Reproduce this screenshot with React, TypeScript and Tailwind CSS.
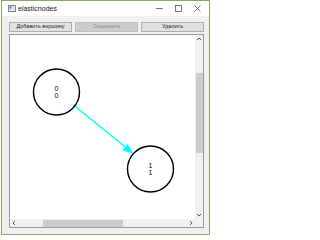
import React from 'react';

// Small chevron used by the scroll bar arrows
const Chevron = ({ dir }: { dir: 'up' | 'down' | 'left' | 'right' }) => {
  const points: Record<string, string> = {
    up: '1,4 3,2 5,4',
    down: '1,2 3,4 5,2',
    left: '4,1 2,3 4,5',
    right: '2,1 4,3 2,5',
  };
  return (
    <svg width="6" height="6" viewBox="0 0 6 6">
      <polyline points={points[dir]} fill="none" stroke="#606060" strokeWidth="1" />
    </svg>
  );
};

const buttons = [
  { label: 'Добавить вершину', disabled: false },
  { label: 'Соединить', disabled: true },
  { label: 'Удалить', disabled: false },
];

export default function App() {
  return (
    <div
      className="w-[212px] h-[237px] bg-white pl-px overflow-hidden"
      style={{ fontFamily: '"Liberation Sans", Arial, sans-serif' }}
    >
      <div className="w-[209px] h-[235px] border border-[#8aa86e] flex flex-col bg-[#f0f0f0]">
        {/* Title bar */}
        <div className="h-[15px] bg-white flex items-center pl-[6px] pr-[8px] shrink-0">
          <svg width="8" height="7" viewBox="0 0 8 7" className="shrink-0">
            <rect x="0.5" y="0.5" width="7" height="6" fill="#dfe6ee" stroke="#7d8a99" />
            <rect x="1.5" y="1.5" width="2" height="2" fill="#4a7ab8" />
          </svg>
          <span className="ml-[2px] text-[7px] leading-none text-[#222]">elasticnodes</span>
          <div className="ml-auto flex items-center gap-[12px]">
            <svg width="7" height="7" viewBox="0 0 7 7">
              <line x1="0" y1="3.5" x2="7" y2="3.5" stroke="#555" strokeWidth="0.8" />
            </svg>
            <svg width="7" height="7" viewBox="0 0 7 7">
              <rect x="0.5" y="0.5" width="6" height="6" fill="none" stroke="#555" strokeWidth="0.8" />
            </svg>
            <svg width="7" height="7" viewBox="0 0 7 7">
              <path d="M0.5 0.5 L6.5 6.5 M6.5 0.5 L0.5 6.5" stroke="#555" strokeWidth="0.8" />
            </svg>
          </div>
        </div>

        {/* Body */}
        <div className="flex-1 flex flex-col pl-[7px] pr-[5px] pt-[6px] pb-[6px] gap-[2px] min-h-0">
          <div className="flex gap-[3px] h-[10px] shrink-0">
            {buttons.map((b) => (
              <div
                key={b.label}
                className={`flex-1 flex items-center justify-center border text-[5.5px] leading-none ${
                  b.disabled
                    ? 'bg-[#cccccc] border-[#bfbfbf] text-[#8a8a8a]'
                    : 'bg-[#e1e1e1] border-[#adadad] text-[#222]'
                }`}
              >
                {b.label}
              </div>
            ))}
          </div>

          {/* Graphics view */}
          <div className="flex-1 border border-[#9a9a9a] bg-white flex flex-col min-h-0">
            <div className="flex-1 flex min-h-0">
              <svg width="184" height="185" viewBox="0 0 184 185" className="flex-1">
                <line x1="63" y1="70" x2="116" y2="113" stroke="#00ffff" strokeWidth="1.5" />
                <polygon points="122,118 112.8,115 117.2,109.6" fill="#00ffff" stroke="#00ffff" strokeWidth="1" />
                <circle cx="46" cy="57" r="23" fill="none" stroke="#000" strokeWidth="1.4" />
                <text x="46" y="56" fontSize="7" textAnchor="middle" fill="#000">0</text>
                <text x="46" y="63" fontSize="7" textAnchor="middle" fill="#000">0</text>
                <circle cx="140" cy="134" r="23" fill="none" stroke="#000" strokeWidth="1.4" />
                <text x="140" y="133" fontSize="7" textAnchor="middle" fill="#000">1</text>
                <text x="140" y="140" fontSize="7" textAnchor="middle" fill="#000">1</text>
              </svg>
              {/* Vertical scroll bar */}
              <div className="w-[8px] bg-[#f0f0f0] flex flex-col items-center shrink-0">
                <div className="h-[8px] flex items-center justify-center">
                  <Chevron dir="up" />
                </div>
                <div className="h-[30px]" />
                <div className="w-[7px] h-[80px] bg-[#cdcdcd]" />
                <div className="flex-1" />
                <div className="h-[8px] flex items-center justify-center">
                  <Chevron dir="down" />
                </div>
              </div>
            </div>
            {/* Horizontal scroll bar */}
            <div className="h-[8px] flex shrink-0">
              <div className="flex-1 bg-[#f0f0f0] flex items-center">
                <div className="w-[8px] flex items-center justify-center">
                  <Chevron dir="left" />
                </div>
                <div className="w-[25px]" />
                <div className="w-[80px] h-[7px] bg-[#cdcdcd]" />
                <div className="flex-1" />
                <div className="w-[8px] flex items-center justify-center">
                  <Chevron dir="right" />
                </div>
              </div>
              <div className="w-[8px] bg-[#f0f0f0]" />
            </div>
          </div>
        </div>
      </div>
    </div>
  );
}
